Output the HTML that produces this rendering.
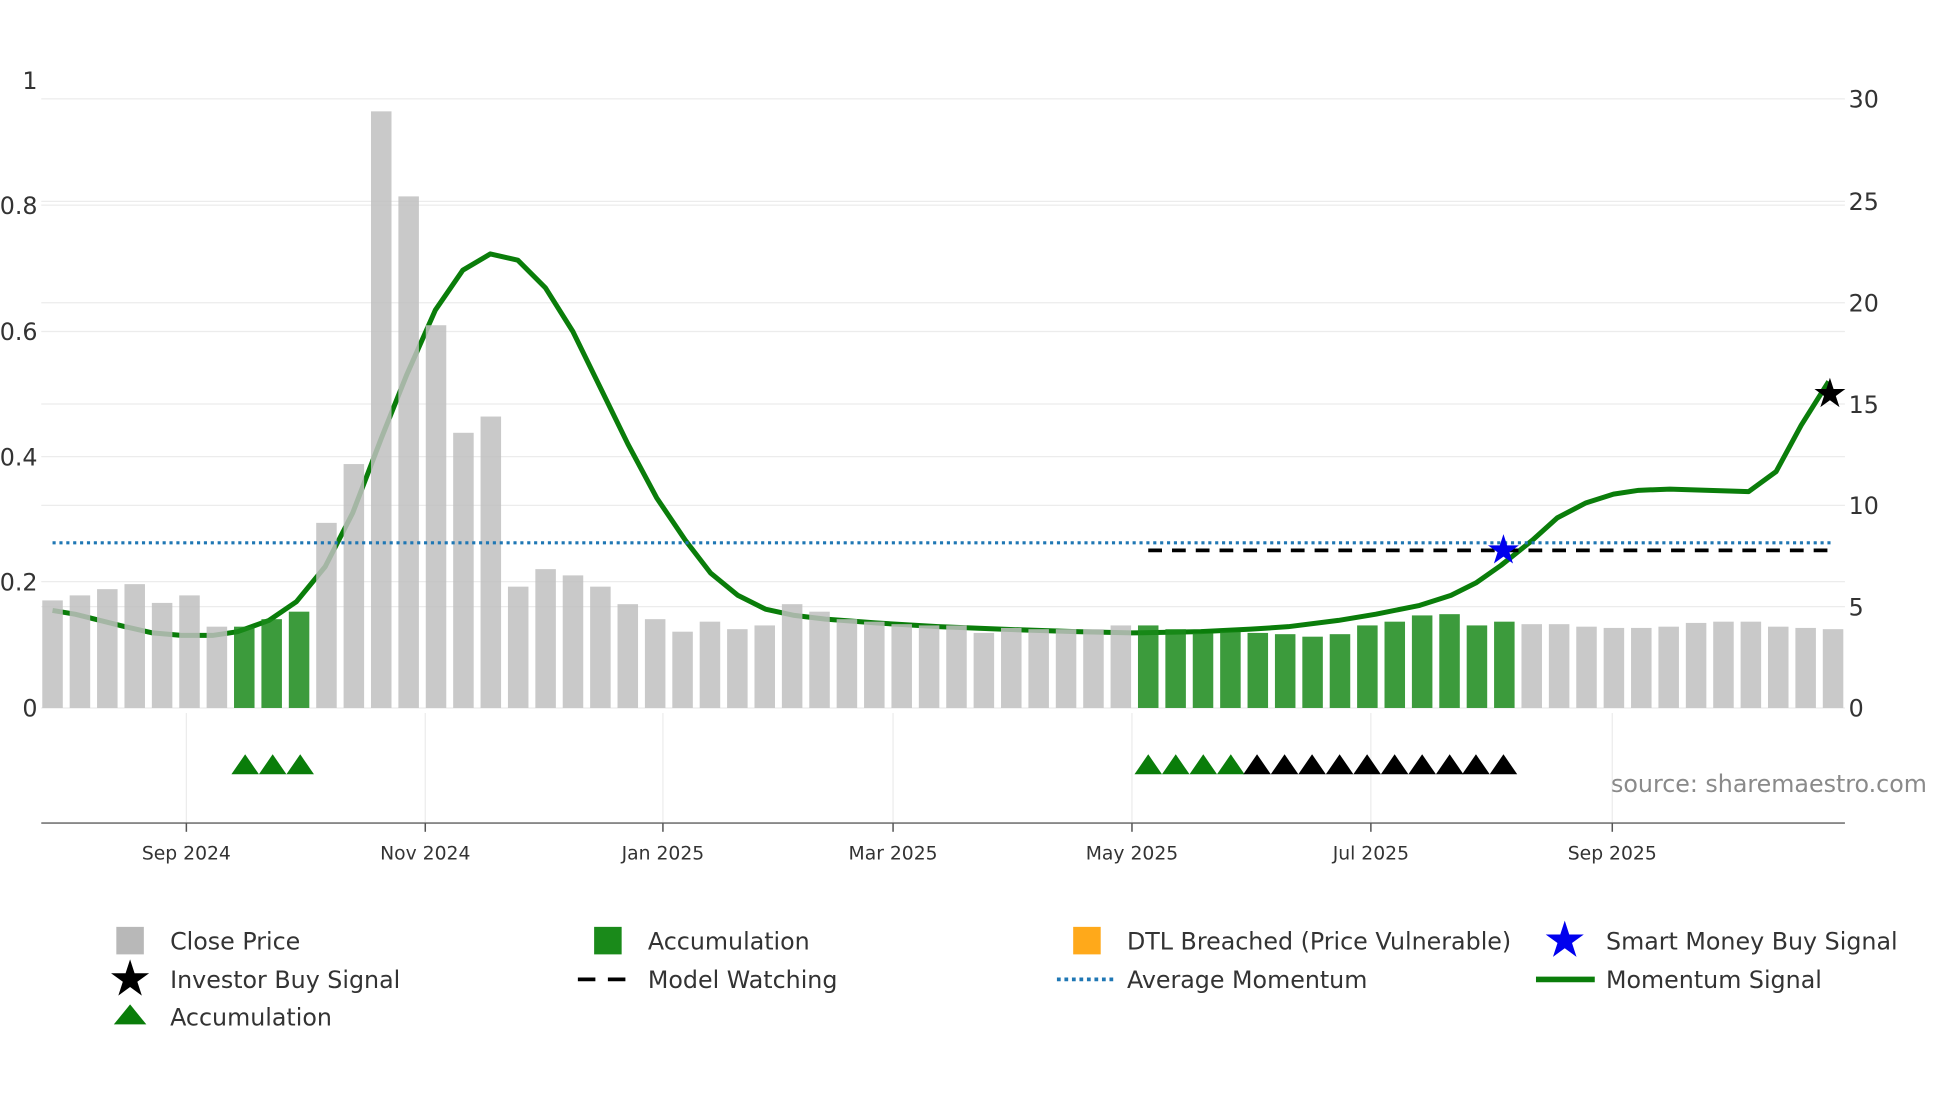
<!DOCTYPE html>
<html><head><meta charset="utf-8"><style>
html,body{margin:0;padding:0;background:#fff;}
svg{display:block;font-family:"DejaVu Sans","Liberation Sans",sans-serif;}
</style></head><body>
<svg width="1960" height="1102" viewBox="0 0 1567 881" xmlns="http://www.w3.org/2000/svg">
<defs>
<polygon id="star" points="0,-1 0.2245,-0.309 0.951,-0.309 0.363,0.118 0.588,0.809 0,0.382 -0.588,0.809 -0.363,0.118 -0.951,-0.309 -0.2245,-0.309"/>
</defs>
<rect width="1567" height="881" fill="#fff"/>
<g stroke="#ececec" stroke-width="1">
<line x1="33" x2="1475" y1="79" y2="79"/><line x1="33" x2="1475" y1="161" y2="161"/>
<line x1="33" x2="1475" y1="164" y2="164"/><line x1="33" x2="1475" y1="242" y2="242"/>
<line x1="33" x2="1475" y1="265" y2="265"/><line x1="33" x2="1475" y1="323" y2="323"/>
<line x1="33" x2="1475" y1="365" y2="365"/><line x1="33" x2="1475" y1="404" y2="404"/>
<line x1="33" x2="1475" y1="465" y2="465"/><line x1="33" x2="1475" y1="485" y2="485"/>
<line x1="33" x2="1475" y1="566" y2="566"/>
<line x1="149" x2="149" y1="570" y2="658"/><line x1="340" x2="340" y1="570" y2="658"/>
<line x1="530" x2="530" y1="570" y2="658"/><line x1="714" x2="714" y1="570" y2="658"/>
<line x1="905" x2="905" y1="570" y2="658"/><line x1="1096" x2="1096" y1="570" y2="658"/>
<line x1="1289" x2="1289" y1="570" y2="658"/>
</g>
<polyline fill="none" stroke="#0a7d0a" stroke-width="4" stroke-linejoin="round" points="42,488 60,491 80,496 100,501 122,506 145,508 170,508 190,505 215,496 237,481 260,453 282,410 305,350 325,300 348,248 370,216 392,203 414,208 436,230 458,265 480,310 502,355 525,398 548,432 568,458 590,476 612,487 635,492 660,495 700,498 750,501 800,503 860,505 905,506 960,505 1000,503 1030,501 1070,496 1100,491 1135,484 1160,476 1180,466 1200,452 1225,432 1245,414 1268,402 1290,395 1310,392 1335,391 1398,393 1420,377 1440,340 1462,305"/>
<g fill-opacity="0.85">
<g fill="#c0c0c0">
<rect x="33.8" y="480" width="16.4" height="86"/>
<rect x="55.7" y="476" width="16.4" height="90"/>
<rect x="77.6" y="471" width="16.4" height="95"/>
<rect x="99.5" y="467" width="16.4" height="99"/>
<rect x="121.4" y="482" width="16.4" height="84"/>
<rect x="143.3" y="476" width="16.4" height="90"/>
<rect x="165.2" y="501" width="16.4" height="65"/>
<rect x="252.8" y="418" width="16.4" height="148"/>
<rect x="274.7" y="371" width="16.4" height="195"/>
<rect x="296.6" y="89" width="16.4" height="477"/>
<rect x="318.5" y="157" width="16.4" height="409"/>
<rect x="340.4" y="260" width="16.4" height="306"/>
<rect x="362.3" y="346" width="16.4" height="220"/>
<rect x="384.2" y="333" width="16.4" height="233"/>
<rect x="406.1" y="469" width="16.4" height="97"/>
<rect x="428.0" y="455" width="16.4" height="111"/>
<rect x="449.9" y="460" width="16.4" height="106"/>
<rect x="471.8" y="469" width="16.4" height="97"/>
<rect x="493.7" y="483" width="16.4" height="83"/>
<rect x="515.6" y="495" width="16.4" height="71"/>
<rect x="537.5" y="505" width="16.4" height="61"/>
<rect x="559.4" y="497" width="16.4" height="69"/>
<rect x="581.3" y="503" width="16.4" height="63"/>
<rect x="603.2" y="500" width="16.4" height="66"/>
<rect x="625.1" y="483" width="16.4" height="83"/>
<rect x="647.0" y="489" width="16.4" height="77"/>
<rect x="668.9" y="495" width="16.4" height="71"/>
<rect x="690.8" y="497" width="16.4" height="69"/>
<rect x="712.7" y="499" width="16.4" height="67"/>
<rect x="734.6" y="500" width="16.4" height="66"/>
<rect x="756.5" y="500" width="16.4" height="66"/>
<rect x="778.4" y="506" width="16.4" height="60"/>
<rect x="800.3" y="502" width="16.4" height="64"/>
<rect x="822.2" y="503" width="16.4" height="63"/>
<rect x="844.1" y="503" width="16.4" height="63"/>
<rect x="866.0" y="503" width="16.4" height="63"/>
<rect x="887.9" y="500" width="16.4" height="66"/>
<rect x="1216.4" y="499" width="16.4" height="67"/>
<rect x="1238.3" y="499" width="16.4" height="67"/>
<rect x="1260.2" y="501" width="16.4" height="65"/>
<rect x="1282.1" y="502" width="16.4" height="64"/>
<rect x="1304.0" y="502" width="16.4" height="64"/>
<rect x="1325.9" y="501" width="16.4" height="65"/>
<rect x="1347.8" y="498" width="16.4" height="68"/>
<rect x="1369.7" y="497" width="16.4" height="69"/>
<rect x="1391.6" y="497" width="16.4" height="69"/>
<rect x="1413.5" y="501" width="16.4" height="65"/>
<rect x="1435.4" y="502" width="16.4" height="64"/>
<rect x="1457.3" y="503" width="16.4" height="63"/>
</g>
<g fill="#1a8a1a">
<rect x="187.1" y="501" width="16.4" height="65"/>
<rect x="209.0" y="495" width="16.4" height="71"/>
<rect x="230.9" y="489" width="16.4" height="77"/>
<rect x="909.8" y="500" width="16.4" height="66"/>
<rect x="931.7" y="503" width="16.4" height="63"/>
<rect x="953.6" y="506" width="16.4" height="60"/>
<rect x="975.5" y="505" width="16.4" height="61"/>
<rect x="997.4" y="506" width="16.4" height="60"/>
<rect x="1019.3" y="507" width="16.4" height="59"/>
<rect x="1041.2" y="509" width="16.4" height="57"/>
<rect x="1063.1" y="507" width="16.4" height="59"/>
<rect x="1085.0" y="500" width="16.4" height="66"/>
<rect x="1106.9" y="497" width="16.4" height="69"/>
<rect x="1128.8" y="492" width="16.4" height="74"/>
<rect x="1150.7" y="491" width="16.4" height="75"/>
<rect x="1172.6" y="500" width="16.4" height="66"/>
<rect x="1194.5" y="497" width="16.4" height="69"/>
</g>
</g>
<line x1="42" x2="1465" y1="434" y2="434" stroke="#1f77b4" stroke-width="2.5" stroke-dasharray="2.5,3"/>
<line x1="918" x2="1465" y1="440" y2="440" stroke="#000" stroke-width="3" stroke-dasharray="11,8"/>
<use href="#star" transform="translate(1202,440) scale(13)" fill="#0000ee"/>
<use href="#star" transform="translate(1463,315) scale(13)" fill="#000"/>
<g fill="#0a7d0a">
<polygon points="185,619 196,603 207,619"/><polygon points="207,619 218,603 229,619"/><polygon points="229,619 240,603 251,619"/>
<polygon points="907,619 918,603 929,619"/><polygon points="929,619 940,603 951,619"/><polygon points="951,619 962,603 973,619"/><polygon points="973,619 984,603 995,619"/>
</g>
<g fill="#000">
<polygon points="994,619 1005,603 1016,619"/><polygon points="1016,619 1027,603 1038,619"/><polygon points="1038,619 1049,603 1060,619"/><polygon points="1060,619 1071,603 1082,619"/><polygon points="1082,619 1093,603 1104,619"/><polygon points="1104,619 1115,603 1126,619"/><polygon points="1126,619 1137,603 1148,619"/><polygon points="1148,619 1159,603 1170,619"/><polygon points="1169,619 1180,603 1191,619"/><polygon points="1191,619 1202,603 1213,619"/>
</g>
<line x1="33" x2="1475" y1="658" y2="658" stroke="#888" stroke-width="1.5"/>
<g stroke="#555" stroke-width="1.2">
<line x1="149" x2="149" y1="658" y2="665"/><line x1="340" x2="340" y1="658" y2="665"/>
<line x1="530" x2="530" y1="658" y2="665"/><line x1="714" x2="714" y1="658" y2="665"/>
<line x1="905" x2="905" y1="658" y2="665"/><line x1="1096" x2="1096" y1="658" y2="665"/>
<line x1="1289" x2="1289" y1="658" y2="665"/>
</g>
<g font-size="15" fill="#333" text-anchor="middle">
<text x="149" y="687">Sep 2024</text><text x="340" y="687">Nov 2024</text>
<text x="530" y="687">Jan 2025</text><text x="714" y="687">Mar 2025</text>
<text x="905" y="687">May 2025</text><text x="1096" y="687">Jul 2025</text>
<text x="1289" y="687">Sep 2025</text>
</g>
<g font-size="19" fill="#333" text-anchor="end">
<text x="30" y="71">1</text><text x="30" y="171">0.8</text><text x="30" y="272">0.6</text>
<text x="30" y="372">0.4</text><text x="30" y="472">0.2</text><text x="30" y="573">0</text>
</g>
<g font-size="19" fill="#333">
<text x="1478" y="86">30</text><text x="1478" y="168">25</text><text x="1478" y="249">20</text>
<text x="1478" y="330">15</text><text x="1478" y="411">10</text><text x="1478" y="492">5</text>
<text x="1478" y="573">0</text>
</g>
<text x="1288" y="633" font-size="19" fill="#8a8a8a">source: sharemaestro.com</text>
<g font-size="19" fill="#333">
<rect x="93" y="741" width="22" height="22" fill="#b8b8b8"/><text x="136" y="759">Close Price</text>
<rect x="475" y="741" width="22" height="22" fill="#1a8a1a"/><text x="518" y="759">Accumulation</text>
<rect x="858" y="741" width="22" height="22" fill="#ffa91a"/><text x="901" y="759">DTL Breached (Price Vulnerable)</text>
<use href="#star" transform="translate(1251,752) scale(16)" fill="#0000ee"/>
<text x="1284" y="759">Smart Money Buy Signal</text>
<use href="#star" transform="translate(104,783) scale(16)" fill="#000"/>
<text x="136" y="790">Investor Buy Signal</text>
<line x1="462" x2="508" y1="783" y2="783" stroke="#000" stroke-width="3" stroke-dasharray="14,10"/>
<text x="518" y="790">Model Watching</text>
<line x1="845" x2="890" y1="783" y2="783" stroke="#1f77b4" stroke-width="3" stroke-dasharray="3,3"/>
<text x="901" y="790">Average Momentum</text>
<line x1="1228" x2="1275" y1="783" y2="783" stroke="#0a7d0a" stroke-width="4.5"/>
<text x="1284" y="790">Momentum Signal</text>
<polygon points="91,819 104,803 117,819" fill="#0a7d0a"/>
<text x="136" y="820">Accumulation</text>
</g>
</svg>
</body></html>
